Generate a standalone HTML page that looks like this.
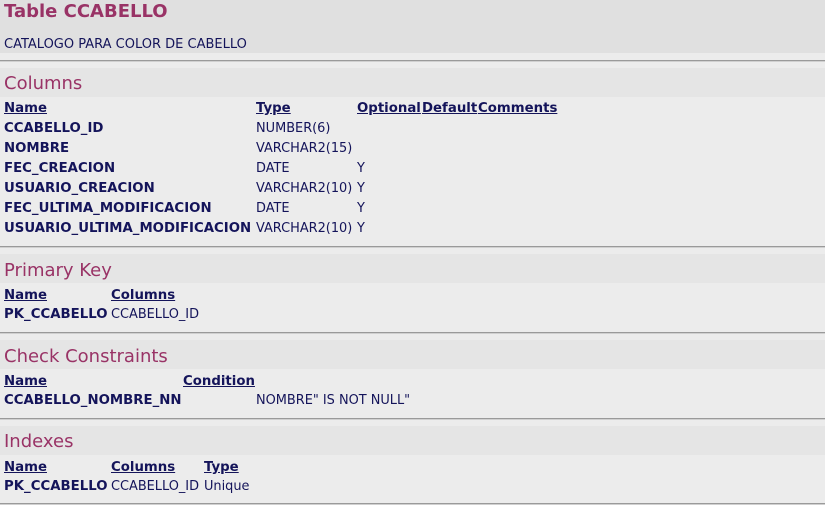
<!DOCTYPE html>
<html><head><meta charset="utf-8"><style>
body{margin:0;width:825px;height:505px;background:#ececec;position:relative;overflow:hidden;font-family:"DejaVu Sans",Verdana,"Liberation Sans",sans-serif;color:#14145a}
.a{position:absolute;white-space:nowrap;line-height:1}
.band{position:absolute;left:0;width:825px}
.hr{position:absolute;left:0;width:825px;height:1px;background:#9a9a9a;border-bottom:1px solid #d0d0d0}
.h{font-size:18px;color:#993366}
.b{font-weight:bold;font-size:13.3px}
.u{text-decoration:underline}
.n{font-size:12.9px;margin-top:1px}
</style></head><body>
<div class="band" style="top:0;height:53px;background:#e0e0e0"></div>
<div class="a" style="left:4px;top:3px;font-size:18px;font-weight:bold;color:#993366">Table CCABELLO</div>
<div class="a n" style="left:4px;top:37px;font-size:13px">CATALOGO PARA COLOR DE CABELLO</div>
<div class="hr" style="top:60px"></div>

<div class="band" style="top:68px;height:29px;background:#e5e5e5"></div>
<div class="a h" style="left:4px;top:75px">Columns</div>
<div class="a b u" style="left:4px;top:102px">Name</div>
<div class="a b u" style="left:256px;top:102px">Type</div>
<div class="a b u" style="left:357px;top:102px">Optional</div>
<div class="a b u" style="left:422px;top:102px">Default</div>
<div class="a b u" style="left:478px;top:102px">Comments</div>
<div class="a b" style="left:4px;top:122px">CCABELLO_ID</div><div class="a n" style="left:256px;top:122px">NUMBER(6)</div>
<div class="a b" style="left:4px;top:142px">NOMBRE</div><div class="a n" style="left:256px;top:142px">VARCHAR2(15)</div>
<div class="a b" style="left:4px;top:162px">FEC_CREACION</div><div class="a n" style="left:256px;top:162px">DATE</div><div class="a n" style="left:357px;top:162px">Y</div>
<div class="a b" style="left:4px;top:182px">USUARIO_CREACION</div><div class="a n" style="left:256px;top:182px">VARCHAR2(10)</div><div class="a n" style="left:357px;top:182px">Y</div>
<div class="a b" style="left:4px;top:202px">FEC_ULTIMA_MODIFICACION</div><div class="a n" style="left:256px;top:202px">DATE</div><div class="a n" style="left:357px;top:202px">Y</div>
<div class="a b" style="left:4px;top:222px">USUARIO_ULTIMA_MODIFICACION</div><div class="a n" style="left:256px;top:222px">VARCHAR2(10)</div><div class="a n" style="left:357px;top:222px">Y</div>
<div class="hr" style="top:246px"></div>

<div class="band" style="top:254px;height:29px;background:#e5e5e5"></div>
<div class="a h" style="left:4px;top:262px">Primary Key</div>
<div class="a b u" style="left:4px;top:289px">Name</div>
<div class="a b u" style="left:111px;top:289px">Columns</div>
<div class="a b" style="left:4px;top:308px">PK_CCABELLO</div><div class="a n" style="left:111px;top:308px">CCABELLO_ID</div>
<div class="hr" style="top:332px"></div>

<div class="band" style="top:340px;height:29px;background:#e5e5e5"></div>
<div class="a h" style="left:4px;top:348px">Check Constraints</div>
<div class="a b u" style="left:4px;top:375px">Name</div>
<div class="a b u" style="left:183px;top:375px">Condition</div>
<div class="a b" style="left:4px;top:394px">CCABELLO_NOMBRE_NN</div><div class="a n" style="left:256px;top:394px">NOMBRE" IS NOT NULL"</div>
<div class="hr" style="top:418px"></div>

<div class="band" style="top:426px;height:29px;background:#e5e5e5"></div>
<div class="a h" style="left:4px;top:433px">Indexes</div>
<div class="a b u" style="left:4px;top:461px">Name</div>
<div class="a b u" style="left:111px;top:461px">Columns</div>
<div class="a b u" style="left:204px;top:461px">Type</div>
<div class="a b" style="left:4px;top:480px">PK_CCABELLO</div><div class="a n" style="left:111px;top:480px">CCABELLO_ID</div><div class="a n" style="left:204px;top:480px">Unique</div>
<div class="hr" style="top:503px"></div>
</body></html>
